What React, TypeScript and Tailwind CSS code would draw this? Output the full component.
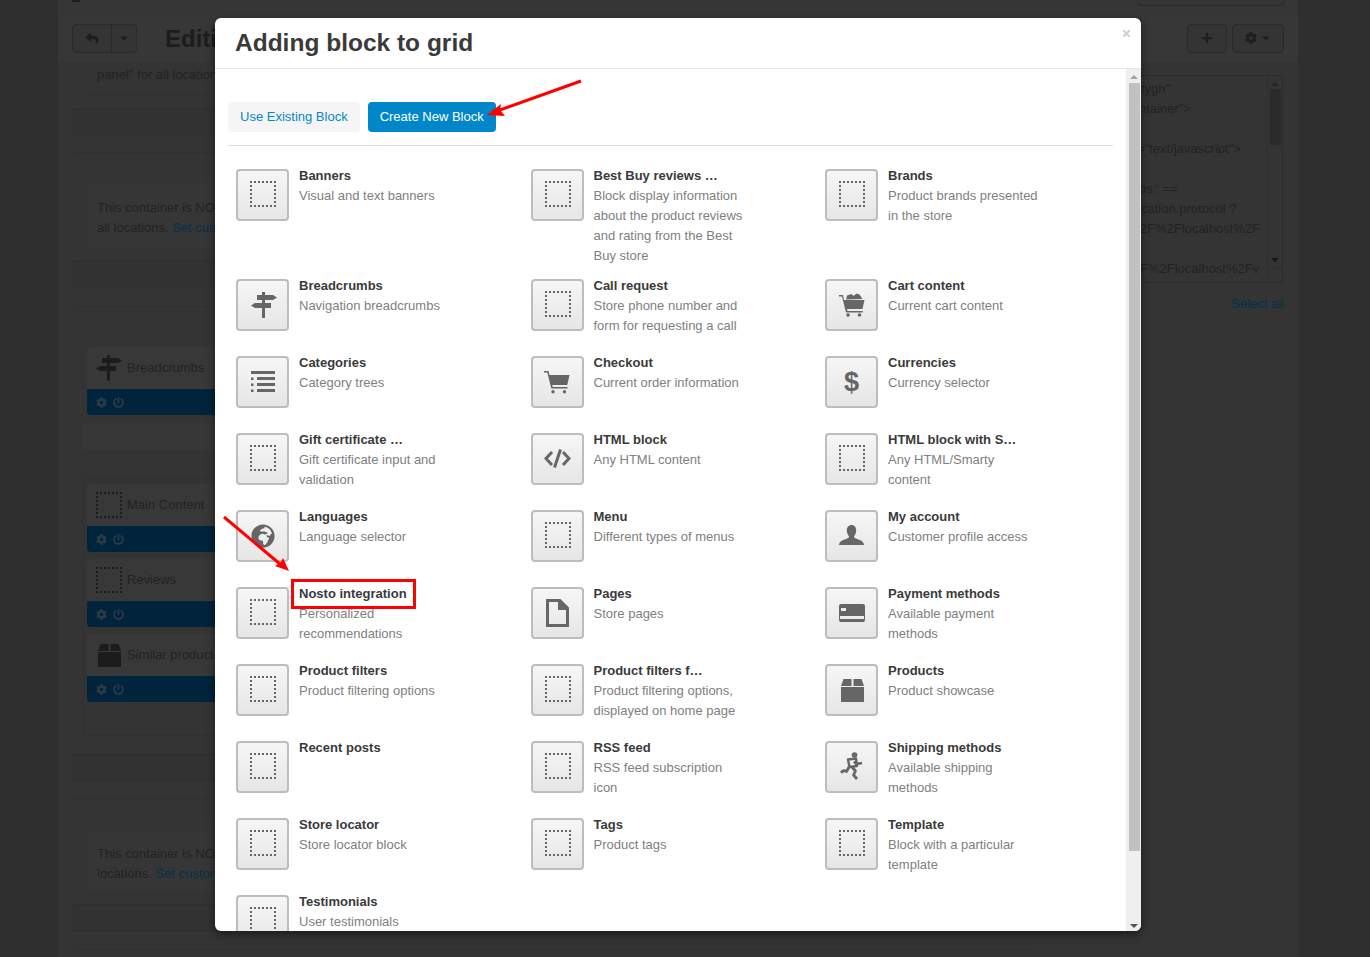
import { FaCog, FaGlobeAfrica, FaPlus, FaPowerOff, FaReply, FaCaretDown, FaTimes } from "react-icons/fa";

const Dashed = ({ className = "" }: { className?: string }) => (
  <svg viewBox="0 0 26 26" className={className} fill="none" stroke="currentColor" strokeWidth="2" strokeDasharray="2 2">
    <path d="M0 1H26" />
    <path d="M0 25H26" />
    <path d="M1 0V26" />
    <path d="M25 0V26" />
  </svg>
);

const Signpost = ({ className = "" }: { className?: string }) => (
  <svg viewBox="0 0 26 26" className={className} fill="currentColor">
    <rect x="11" y="0" width="3" height="26" />
    <path d="M6 3h16l4 2.500L22 8H6z" />
    <path d="M4 11h16v5H4L0 13.500z" />
  </svg>
);

const ListIcon = ({ className = "" }: { className?: string }) => (
  <svg viewBox="0 0 25 22" className={className} fill="currentColor">
    <rect x="0" y="0" width="24" height="3" />
    <rect x="0" y="6.500" width="2.500" height="2.500" />
    <rect x="6" y="6" width="18" height="3" />
    <rect x="0" y="12.500" width="2.500" height="2.500" />
    <rect x="6" y="12" width="18" height="3" />
    <rect x="0" y="18.500" width="2.500" height="2.500" />
    <rect x="6" y="18" width="18" height="3" />
  </svg>
);

const Cart = ({ className = "" }: { className?: string }) => (
  <svg viewBox="0 0 26 23" className={className} fill="currentColor">
    <path d="M0 0h4.500l1 4h20l-2.200 10H8.200l.5 2h14.800v1.600H7.300L3.300 1.600H0z" />
    <circle cx="9" cy="20.800" r="1.700" />
    <circle cx="20.500" cy="20.800" r="1.700" />
  </svg>
);

const CartFull = ({ className = "" }: { className?: string }) => (
  <svg viewBox="0 0 26 24" className={className} fill="currentColor">
    <path d="M0 2h4l1 5h20.500l-2 9H8l.4 2h15.400v1.400H7L3 3.400H0z" />
    <path d="M7 6.500 8 2.500l4.500-1.500 2 2 3-2.500 3 1 3 4.500z" />
    <circle cx="9" cy="22" r="1.800" />
    <circle cx="20.500" cy="22" r="1.800" />
  </svg>
);

const Code = ({ className = "" }: { className?: string }) => (
  <svg viewBox="0 0 27 19" className={className} fill="none" stroke="currentColor" strokeWidth="3">
    <path d="M8 3 2 9.500 8 16" />
    <path d="M16.500 0.500 10.500 18.500" />
    <path d="M19 3l6 6.500L19 16" />
  </svg>
);

const PageIcon = ({ className = "" }: { className?: string }) => (
  <svg viewBox="0 0 23 28" className={className} fill="currentColor">
    <path fillRule="evenodd" d="M0 0h14.500L23 8.500V28H0zM3 3v22h17V11h-8V3z" />
    <path d="M14 2l7 7h-7z" />
  </svg>
);

const User = ({ className = "" }: { className?: string }) => (
  <svg viewBox="0 0 25 20" className={className} fill="currentColor">
    <path d="M12.500 0c3 0 4.700 2.300 4.700 5.500 0 2.500-1 4.500-2.200 5.700 0 1.300.5 1.800 2.500 2.500 3.500 1.200 7 2 7.500 6.300H0c.5-4.300 4-5.100 7.500-6.300 2-.7 2.500-1.200 2.500-2.500C8.800 10 7.800 8 7.800 5.500 7.800 2.300 9.500 0 12.500 0z" />
  </svg>
);

const CardIcon = ({ className = "" }: { className?: string }) => (
  <svg viewBox="0 0 26 18" className={className} fill="currentColor">
    <path fillRule="evenodd" d="M2 0h22a2 2 0 0 1 2 2v14a2 2 0 0 1-2 2H2a2 2 0 0 1-2-2V2a2 2 0 0 1 2-2zM1 12v3h24v-3zM2 4v3h5V4z" />
  </svg>
);

const BoxIcon = ({ className = "" }: { className?: string }) => (
  <svg viewBox="0 0 23 23" className={className} fill="currentColor">
    <path d="M2.500 0h8v7H0z" />
    <path d="M12.500 0h8L23 7H12.500z" />
    <rect x="0" y="8" width="23" height="15" />
  </svg>
);

// runner carrying a parcel
const Runner = ({ className = "" }: { className?: string }) => (
  <svg viewBox="0 0 24 30" className={className} fill="none" stroke="currentColor" strokeWidth="2.700" strokeLinejoin="round">
    <circle cx="14.500" cy="3" r="2.800" fill="currentColor" stroke="none" />
    <path d="M8 7.500 16 6.500 17 14 9.500 15z" strokeWidth="2.400" />
    <path d="M14 9.500 16.500 12 22 11" />
    <path d="M9 15 6.500 19.500 4 18.500 0.800 20.500" />
    <path d="M12 15 15.500 19 13.500 23 17 27" />
  </svg>
);

type Block = { title: string; desc?: string; icon?: React.ReactNode };

const blocks: Block[] = [
  { title: "Banners", desc: "Visual and text banners" },
  { title: "Best Buy reviews …", desc: "Block display information about the product reviews and rating from the Best Buy store" },
  { title: "Brands", desc: "Product brands presented in the store" },
  { title: "Breadcrumbs", desc: "Navigation breadcrumbs", icon: <Signpost className="ml-[2px] h-[26px] w-[26px]" /> },
  { title: "Call request", desc: "Store phone number and form for requesting a call" },
  { title: "Cart content", desc: "Current cart content", icon: <CartFull className="ml-[1px] h-[24px] w-[26px]" /> },
  { title: "Categories", desc: "Category trees", icon: <ListIcon className="ml-[1px] h-[22px] w-[25px]" /> },
  { title: "Checkout", desc: "Current order information", icon: <Cart className="h-[23px] w-[26px]" /> },
  { title: "Currencies", desc: "Currency selector", icon: <span className="text-[27px] font-bold leading-none">$</span> },
  { title: "Gift certificate …", desc: "Gift certificate input and validation" },
  { title: "HTML block", desc: "Any HTML content", icon: <Code className="mb-[2px] h-[19px] w-[27px]" /> },
  { title: "HTML block with S…", desc: "Any HTML/Smarty content" },
  { title: "Languages", desc: "Language selector", icon: <FaGlobeAfrica className="h-[24px] w-[24px]" /> },
  { title: "Menu", desc: "Different types of menus" },
  { title: "My account", desc: "Customer profile access", icon: <User className="mb-[2px] h-[20px] w-[25px]" /> },
  { title: "Nosto integration", desc: "Personalized recommendations" },
  { title: "Pages", desc: "Store pages", icon: <PageIcon className="ml-[1px] h-[28px] w-[23px]" /> },
  { title: "Payment methods", desc: "Available payment methods", icon: <CardIcon className="h-[18px] w-[26px]" /> },
  { title: "Product filters", desc: "Product filtering options" },
  { title: "Product filters f…", desc: "Product filtering options, displayed on home page" },
  { title: "Products", desc: "Product showcase", icon: <BoxIcon className="ml-[1px] h-[23px] w-[23px]" /> },
  { title: "Recent posts" },
  { title: "RSS feed", desc: "RSS feed subscription icon" },
  { title: "Shipping methods", desc: "Available shipping methods", icon: <Runner className="h-[30px] w-[24px]" /> },
  { title: "Store locator", desc: "Store locator block" },
  { title: "Tags", desc: "Product tags" },
  { title: "Template", desc: "Block with a particular template" },
  { title: "Testimonials", desc: "User testimonials" },
];

const BlockCell = ({ title, desc, icon }: Block) => (
  <div className="flex min-h-[77px] pb-[10px]">
    <div className="mt-[3px] flex h-[52px] w-[53px] shrink-0 items-center justify-center rounded-[4px] border-2 border-[#bdbdbd] bg-gradient-to-b from-[#f6f6f6] to-[#e6e6e6] text-[#666666]">
      {icon ?? <Dashed className="mb-[2px] ml-[1px] h-[26px] w-[26px]" />}
    </div>
    <div className="ml-[10px] w-[151px]">
      <div className="font-bold text-[#3a3a3a]">{title}</div>
      {desc && <div className="text-[#808080]">{desc}</div>}
    </div>
  </div>
);

const DimBar = () => <div className="h-[27px] border border-[#2e2e2e] bg-[#323232]" />;

const DimBlock = ({ label, icon }: { label: string; icon: React.ReactNode }) => (
  <div className="h-[68px] overflow-hidden rounded-[4px] bg-[#383838]">
    <div className="flex h-[42px] items-center gap-[5px] pl-[9px]">
      <div className="flex w-[26px] justify-center">{icon}</div>
      <span className="text-[#222222]">{label}</span>
    </div>
    <div className="flex h-[26px] items-center gap-[6px] bg-[#00243b] pl-[9px] text-[#2a3b47]">
      <FaCog className="h-[11px] w-[11px]" />
      <FaPowerOff className="h-[11px] w-[11px]" />
    </div>
  </div>
);

const codeLines = [
  { text: 'tygh"', pad: "pl-[40px]", gap: "" },
  { text: 'ntainer">', pad: "pl-[38px]", gap: "" },
  { text: '="text/javascript">', pad: "pl-[36px]", gap: "mt-[20px]" },
  { text: "ps:' ==", pad: "pl-[38px]", gap: "mt-[20px]" },
  { text: "cation.protocol ?", pad: "pl-[40px]", gap: "" },
  { text: "2F%2Flocalhost%2F", pad: "pl-[39px]", gap: "" },
  { text: "F%2Flocalhost%2Fv", pad: "pl-[39px]", gap: "mt-[20px]" },
];

const Background = () => (
  <div className="ml-[58px] h-[957px] w-[1240px] bg-[#343434] text-[13px] leading-5 text-[#222222]">
    <div className="relative h-[14px] bg-[#363636]">
      <div className="ml-[14px] h-[2px] w-[8px] bg-[#1e1e1e]" />
      <div className="absolute right-[13px] top-0 h-[6px] w-[148px] rounded-b-[8px] border border-t-0 border-[#2b2b2b]" />
    </div>
    <div className="flex h-[48px] items-center bg-[#373737] px-[14px]">
      <div className="flex h-[29px] w-[65px] rounded-[4px] border border-[#2a2a2a] bg-[#343434] text-[#1e1e1e]">
        <div className="flex w-[39px] items-center justify-center border-r border-[#2a2a2a]">
          <FaReply className="h-[13px] w-[14px]" />
        </div>
        <div className="flex flex-1 items-center justify-center">
          <FaCaretDown className="h-[12px] w-[10px]" />
        </div>
      </div>
      <div className="ml-[28px] mt-[2px] text-[24px] font-bold text-[#1c1c1c]">Editi</div>
      <div className="ml-auto flex h-[29px] gap-[5px] text-[#1e1e1e]">
        <div className="flex w-[40px] items-center justify-center rounded-[4px] border border-[#2a2a2a] bg-[#343434]">
          <FaPlus className="h-[12px] w-[12px]" />
        </div>
        <div className="flex w-[52px] items-center justify-center gap-[4px] rounded-[4px] border border-[#2a2a2a] bg-[#343434]">
          <FaCog className="h-[12px] w-[12px]" />
          <FaCaretDown className="h-[12px] w-[10px]" />
        </div>
      </div>
    </div>

    <div className="flex">
      <div className="ml-[15px] w-[960px]">
        <div className="ml-[14px] h-[33px] border-b border-[#303030] pl-[10px] pt-[3px]">panel" for all locations.</div>
        <div className="mt-[13px]"><DimBar /></div>
        <div className="mt-[17px] border-t border-[#303030]" />
        <div className="mt-[22px] h-[12px] bg-[#353535]" />
        <div className="ml-[14px] h-[60px] bg-[#363636] pl-[10px] pt-[10px]">
          <div className="translate-y-[1px]">
            This container is NOT used on all pages,
            <br />
            all locations. <span className="text-[#03304a]">Set custom</span>
          </div>
        </div>
        <div className="mt-[13px]"><DimBar /></div>
        <div className="mt-[19px] border-t border-[#303030]" />

        <div className="ml-[10px] mt-[30px]">
          <div className="px-[4px] pt-[10px]">
            <DimBlock label="Breadcrumbs" icon={<Signpost className="h-[26px] w-[26px] text-[#1c1c1c]" />} />
          </div>
          <div className="mt-[8px] h-[27px] bg-[#373737]" />
          <div className="mt-[28px] h-[258px] border border-[#303030] px-[3px] pt-[5px]">
            <div className="flex flex-col gap-[7px]">
              <DimBlock label="Main Content" icon={<Dashed className="h-[26px] w-[26px] text-[#1c1c1c]" />} />
              <DimBlock label="Reviews" icon={<Dashed className="h-[26px] w-[26px] text-[#1c1c1c]" />} />
              <DimBlock label="Similar products" icon={<BoxIcon className="h-[23px] w-[23px] text-[#1c1c1c]" />} />
            </div>
          </div>
        </div>
        <div className="mt-[18px]"><DimBar /></div>
        <div className="mt-[17px] border-t border-[#303030]" />
        <div className="mt-[21px] h-[14px] bg-[#353535]" />
        <div className="ml-[14px] h-[58px] bg-[#363636] pl-[10px] pt-[10px]">
          This container is NOT used on all
          <br />
          locations. <span className="text-[#03304a]">Set custom</span>
        </div>
        <div className="mt-[12px]"><DimBar /></div>
        <div className="mt-[18px] border-t border-[#303030]" />
      </div>

      <div className="ml-[67px] w-[184px] pt-[13px]">
        <div className="mr-[1px] flex h-[208px] overflow-hidden rounded-[4px] border border-[#2b2b2b]">
          <div className="flex-1 pt-[3px]">
            {codeLines.map((line) => (
              <div key={line.text} className={`whitespace-nowrap ${line.pad} ${line.gap}`}>
                {line.text}
              </div>
            ))}
          </div>
          <div className="flex w-[15px] flex-col items-center border-l border-[#2e2e2e]">
            <div className="mt-[6px] h-0 w-0 border-x-[4px] border-b-[4px] border-x-transparent border-b-[#242424]" />
            <div className="mt-[3px] h-[56px] w-[11px] bg-[#2a2a2a]" />
            <div className="mb-[5px] mt-auto h-0 w-0 border-x-[4px] border-t-[4px] border-x-transparent border-t-[#161616]" />
            <div className="h-[15px] w-full border-t border-[#2e2e2e]" />
          </div>
        </div>
        <div className="mt-[11px] text-right text-[#03304a]">Select all</div>
      </div>
    </div>
  </div>
);

const Arrows = () => (
  <svg className="pointer-events-none absolute left-0 top-0 h-[957px] w-[1370px]" viewBox="0 0 1370 957" fill="none">
    <path d="M581 81 497 111" stroke="#ff0000" strokeWidth="3" />
    <path d="M487 115 501 104 500 110 505 116z" fill="#ff0000" />
    <path d="M224 517 280 564" stroke="#ff0000" strokeWidth="3" />
    <path d="M289 571 275 566 281 562 283 558z" fill="#ff0000" />
  </svg>
);

export default function App() {
  return (
    <div className="relative h-[957px] w-[1370px] overflow-hidden bg-[#2f2f2f] font-['Liberation_Sans',Arial,sans-serif]">
      <Background />

      <div className="absolute left-[215px] top-[18px] flex h-[913px] w-[926px] flex-col overflow-hidden rounded-[6px] bg-white text-[13px] leading-5 shadow-[0_3px_9px_rgba(0,0,0,0.5)]">
        <div className="flex h-[51px] shrink-0 items-start justify-between border-b border-[#e5e5e5] pl-[20px] pr-[9px]">
          <h1 className="mt-[9px] text-[24.5px] font-bold leading-[32px] text-[#3a3a3a]">Adding block to grid</h1>
          <FaTimes className="mt-[10px] h-[11px] w-[11px] text-[#d0d0d0]" />
        </div>
        <div className="flex min-h-0 flex-1">
          <div className="min-w-0 flex-1 overflow-hidden pl-[13px] pr-[13px] pt-[33px]">
            <div className="flex gap-[8px] border-b border-[#dddddd] pb-[13px]">
              <div className="flex h-[30px] items-center rounded-[4px] bg-[#f5f5f5] px-[12px] text-[#0388cc]">Use Existing Block</div>
              <div className="flex h-[30px] items-center rounded-[4px] bg-[#0087c9] px-[12px] text-white">Create New Block</div>
            </div>
            <div className="ml-[8px] mt-[20px] grid grid-cols-[repeat(3,294.5px)]">
              {blocks.map((b) => (
                <BlockCell key={b.title} {...b} />
              ))}
            </div>
          </div>
          <div className="flex w-[15px] shrink-0 flex-col items-center bg-[#efefef]">
            <div className="mt-[6px] h-0 w-0 border-x-[4px] border-b-[4px] border-x-transparent border-b-[#a3a3a3]" />
            <div className="ml-[1px] mt-[4px] h-[768px] w-[11px] bg-[#c1c1c1]" />
            <div className="mb-[3px] mt-auto h-0 w-0 border-x-[4px] border-t-[4px] border-x-transparent border-t-[#505050]" />
          </div>
        </div>
      </div>

      <div className="absolute left-[291px] top-[579px] h-[30px] w-[125px] border-[3px] border-[#ff0000]" />
      <Arrows />
    </div>
  );
}
